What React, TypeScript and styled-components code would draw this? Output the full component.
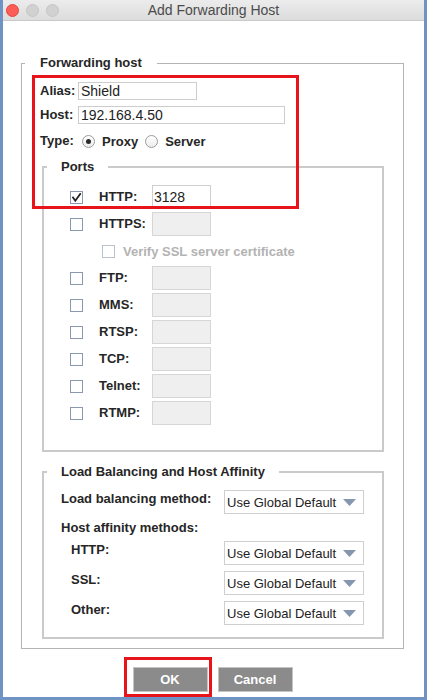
import React from 'react';
import styled, { createGlobalStyle } from 'styled-components';

const GlobalStyle = createGlobalStyle`
  html, body { margin: 0; padding: 0; background: #ffffff; }
  body { font-family: "Liberation Sans", Arial, Helvetica, sans-serif; color: #262626; }
  * { box-sizing: border-box; }
`;

const FONT = `"Liberation Sans", Arial, Helvetica, sans-serif`;

const Frame = styled.div`
  position: relative;
  width: 427px;
  height: 700px;
  background: #ffffff;
  border-left: 3px solid #6f93c5;
  border-right: 3px solid #6f93c5;
  border-bottom: 3px solid #6f93c5;
  display: flex;
  flex-direction: column;
`;

const TitleBar = styled.div`
  flex: none;
  height: 21px;
  display: grid;
  grid-template-columns: 1fr auto 1fr;
  align-items: center;
  background: linear-gradient(#ececec, #dcdcdc);
  border-bottom: 1px solid #c9c9c9;
`;

const Lights = styled.div`
  display: flex;
  gap: 7px;
  padding-left: 3px;
`;

const Light = styled.span<{ $red?: boolean }>`
  width: 13px;
  height: 13px;
  border-radius: 50%;
  background: ${(p) => (p.$red ? '#fc5d56' : '#d1d1d1')};
  border: 1px solid ${(p) => (p.$red ? '#e5473f' : '#c6c6c6')};
`;

const Title = styled.div`
  font-size: 14px;
  line-height: 16px;
  color: #4b4b4b;
  white-space: nowrap;
`;

const Content = styled.div`
  flex: 1;
  display: flex;
  flex-direction: column;
  padding: 34px 20px 0 18px;
`;

const OuterGroup = styled.fieldset`
  margin: 0;
  padding: 0;
  min-width: 0;
  border: 1px solid #b4b4b4;
`;

const InnerGroup = styled.fieldset<{ $top: number }>`
  margin: ${(p) => p.$top}px 0 0 2px;
  padding: 0;
  min-width: 0;
  border: 2px solid #cacaca;
`;

const Legend = styled.legend<{ $pad: number }>`
  margin-left: 3px;
  padding: 0 ${(p) => p.$pad}px;
  font-size: 13px;
  line-height: 16px;
  font-weight: bold;
  color: #262626;
  white-space: nowrap;
`;

const OuterBody = styled.div`
  display: flex;
  flex-direction: column;
  padding: 11px 19px 9px 18px;
`;

const FieldRow = styled.div<{ $top: number; $h: number }>`
  display: flex;
  align-items: center;
  height: ${(p) => p.$h}px;
  margin-top: ${(p) => p.$top}px;
`;

const FieldLabel = styled.span`
  width: 38px;
  flex: none;
  font-size: 13px;
  font-weight: bold;
  line-height: 16px;
`;

const TextInput = styled.input<{ $w: number }>`
  width: ${(p) => p.$w}px;
  height: 18px;
  border: 1px solid #cdcdcd;
  padding: 0 2px;
  font-family: ${FONT};
  font-size: 14px;
  color: #222;
  background: #fff;
  outline: none;
`;

const RadioGroup = styled.div`
  display: flex;
  align-items: center;
  margin-left: 4px;
`;

const Radio = styled.span<{ $checked?: boolean; $left: number }>`
  width: 13px;
  height: 13px;
  border-radius: 50%;
  border: 1px solid #9c9c9c;
  background: linear-gradient(#ffffff, #ececec);
  margin-left: ${(p) => p.$left}px;
  display: flex;
  align-items: center;
  justify-content: center;
  &::after {
    content: '';
    display: ${(p) => (p.$checked ? 'block' : 'none')};
    width: 5px;
    height: 5px;
    border-radius: 50%;
    background: #2b2b2b;
  }
`;

const RadioText = styled.span`
  margin-left: 7px;
  font-size: 13px;
  font-weight: bold;
`;

const PortsBody = styled.div`
  display: flex;
  flex-direction: column;
  gap: 3px;
  padding: 10px 0 25px 26px;
`;

const PortRow = styled.div<{ $indent?: number }>`
  display: flex;
  align-items: center;
  height: 24px;
  padding-left: ${(p) => p.$indent ?? 0}px;
`;

const CheckBox = styled.span<{ $dim?: boolean }>`
  flex: none;
  width: 13px;
  height: 13px;
  border: 1px solid ${(p) => (p.$dim ? '#b9c3cf' : '#8a99ad')};
  background: #fff;
  display: flex;
  align-items: center;
  justify-content: center;
`;

const PortLabel = styled.span`
  width: 53px;
  margin-left: 16px;
  font-size: 13px;
  font-weight: bold;
  line-height: 16px;
`;

const PortInput = styled.input<{ $disabled?: boolean }>`
  width: 59px;
  height: 24px;
  border: 1px solid ${(p) => (p.$disabled ? '#d6d6d6' : '#cfcfcf')};
  background: ${(p) => (p.$disabled ? '#efefef' : '#ffffff')};
  padding: 0 1px;
  font-family: ${FONT};
  font-size: 14px;
  color: #222;
  outline: none;
`;

const VerifyText = styled.span`
  margin-left: 8px;
  font-size: 13px;
  font-weight: bold;
  color: #b3b3b3;
  white-space: nowrap;
`;

const LBBody = styled.div`
  display: flex;
  flex-direction: column;
  padding: 10px 0 12px 17px;
`;

const LBRow = styled.div<{ $top: number }>`
  display: flex;
  align-items: flex-start;
  margin-top: ${(p) => p.$top}px;
`;

const LBLabel = styled.span<{ $indent?: number }>`
  width: 163px;
  flex: none;
  padding-left: ${(p) => p.$indent ?? 0}px;
  margin-top: 1px;
  font-size: 13px;
  font-weight: bold;
  line-height: 16px;
  white-space: nowrap;
`;

const SubHeading = styled.div`
  margin-top: 6px;
  font-size: 13px;
  font-weight: bold;
  line-height: 16px;
`;

const Select = styled.div`
  width: 140px;
  height: 24px;
  border: 1px solid #cfcfcf;
  background: #fff;
  display: flex;
  align-items: center;
  justify-content: space-between;
  padding: 0 7px 0 2px;
  font-size: 13px;
  color: #222;
`;

const ButtonRow = styled.div`
  display: flex;
  justify-content: center;
  gap: 10px;
  margin-top: 18px;
`;

const Button = styled.button`
  width: 75px;
  height: 25px;
  background: #8b8b8b;
  border: 1px solid #c4c4c4;
  color: #ffffff;
  font-family: ${FONT};
  font-size: 13px;
  font-weight: bold;
  padding: 0;
`;

const Annotation = styled.div`
  position: absolute;
  border: 3px solid #e8141c;
  pointer-events: none;
`;

const CheckMark = () => (
  <svg width="11" height="11" viewBox="0 0 11 11">
    <path d="M2 5.5 L4.3 8.8 L9.2 2" fill="none" stroke="#222" strokeWidth="1.8" strokeLinecap="square" />
  </svg>
);

const Arrow = () => (
  <svg width="13" height="7" viewBox="0 0 13 7">
    <path d="M0 0 H13 L6.5 7 Z" fill="#8597ae" />
  </svg>
);

const ports = ['FTP:', 'MMS:', 'RTSP:', 'TCP:', 'Telnet:', 'RTMP:'];

const affinity = [
  { label: 'HTTP:', top: 5 },
  { label: 'SSL:', top: 6 },
  { label: 'Other:', top: 6 },
];

export default function App() {
  return (
    <>
      <GlobalStyle />
      <Frame>
        <TitleBar>
          <Lights>
            <Light $red />
            <Light />
            <Light />
          </Lights>
          <Title>Add Forwarding Host</Title>
          <span />
        </TitleBar>
        <Content>
          <OuterGroup>
            <Legend $pad={15}>Forwarding host</Legend>
            <OuterBody>
              <FieldRow $top={0} $h={18}>
                <FieldLabel>Alias:</FieldLabel>
                <TextInput $w={119} readOnly value="Shield" />
              </FieldRow>
              <FieldRow $top={6} $h={18}>
                <FieldLabel>Host:</FieldLabel>
                <TextInput $w={207} readOnly value="192.168.4.50" />
              </FieldRow>
              <FieldRow $top={9} $h={16}>
                <FieldLabel>Type:</FieldLabel>
                <RadioGroup>
                  <Radio $checked $left={0} />
                  <RadioText>Proxy</RadioText>
                  <Radio $left={7} />
                  <RadioText>Server</RadioText>
                </RadioGroup>
              </FieldRow>

              <InnerGroup $top={10}>
                <Legend $pad={14}>Ports</Legend>
                <PortsBody>
                  <PortRow>
                    <CheckBox>
                      <CheckMark />
                    </CheckBox>
                    <PortLabel>HTTP:</PortLabel>
                    <PortInput readOnly value="3128" />
                  </PortRow>
                  <PortRow>
                    <CheckBox />
                    <PortLabel>HTTPS:</PortLabel>
                    <PortInput $disabled readOnly value="" />
                  </PortRow>
                  <PortRow $indent={32}>
                    <CheckBox $dim />
                    <VerifyText>Verify SSL server certificate</VerifyText>
                  </PortRow>
                  {ports.map((p) => (
                    <PortRow key={p}>
                      <CheckBox />
                      <PortLabel>{p}</PortLabel>
                      <PortInput $disabled readOnly value="" />
                    </PortRow>
                  ))}
                </PortsBody>
              </InnerGroup>

              <InnerGroup $top={12}>
                <Legend $pad={14}>Load Balancing and Host Affinity</Legend>
                <LBBody>
                  <LBRow $top={0}>
                    <LBLabel>Load balancing method:</LBLabel>
                    <Select>
                      Use Global Default
                      <Arrow />
                    </Select>
                  </LBRow>
                  <SubHeading>Host affinity methods:</SubHeading>
                  {affinity.map((a) => (
                    <LBRow key={a.label} $top={a.top}>
                      <LBLabel $indent={10}>{a.label}</LBLabel>
                      <Select>
                        Use Global Default
                        <Arrow />
                      </Select>
                    </LBRow>
                  ))}
                </LBBody>
              </InnerGroup>
            </OuterBody>
          </OuterGroup>
          <ButtonRow>
            <Button>OK</Button>
            <Button>Cancel</Button>
          </ButtonRow>
        </Content>
        <Annotation style={{ left: 29, top: 75, width: 267, height: 134 }} />
        <Annotation style={{ left: 121, top: 657, width: 88, height: 40 }} />
      </Frame>
    </>
  );
}
